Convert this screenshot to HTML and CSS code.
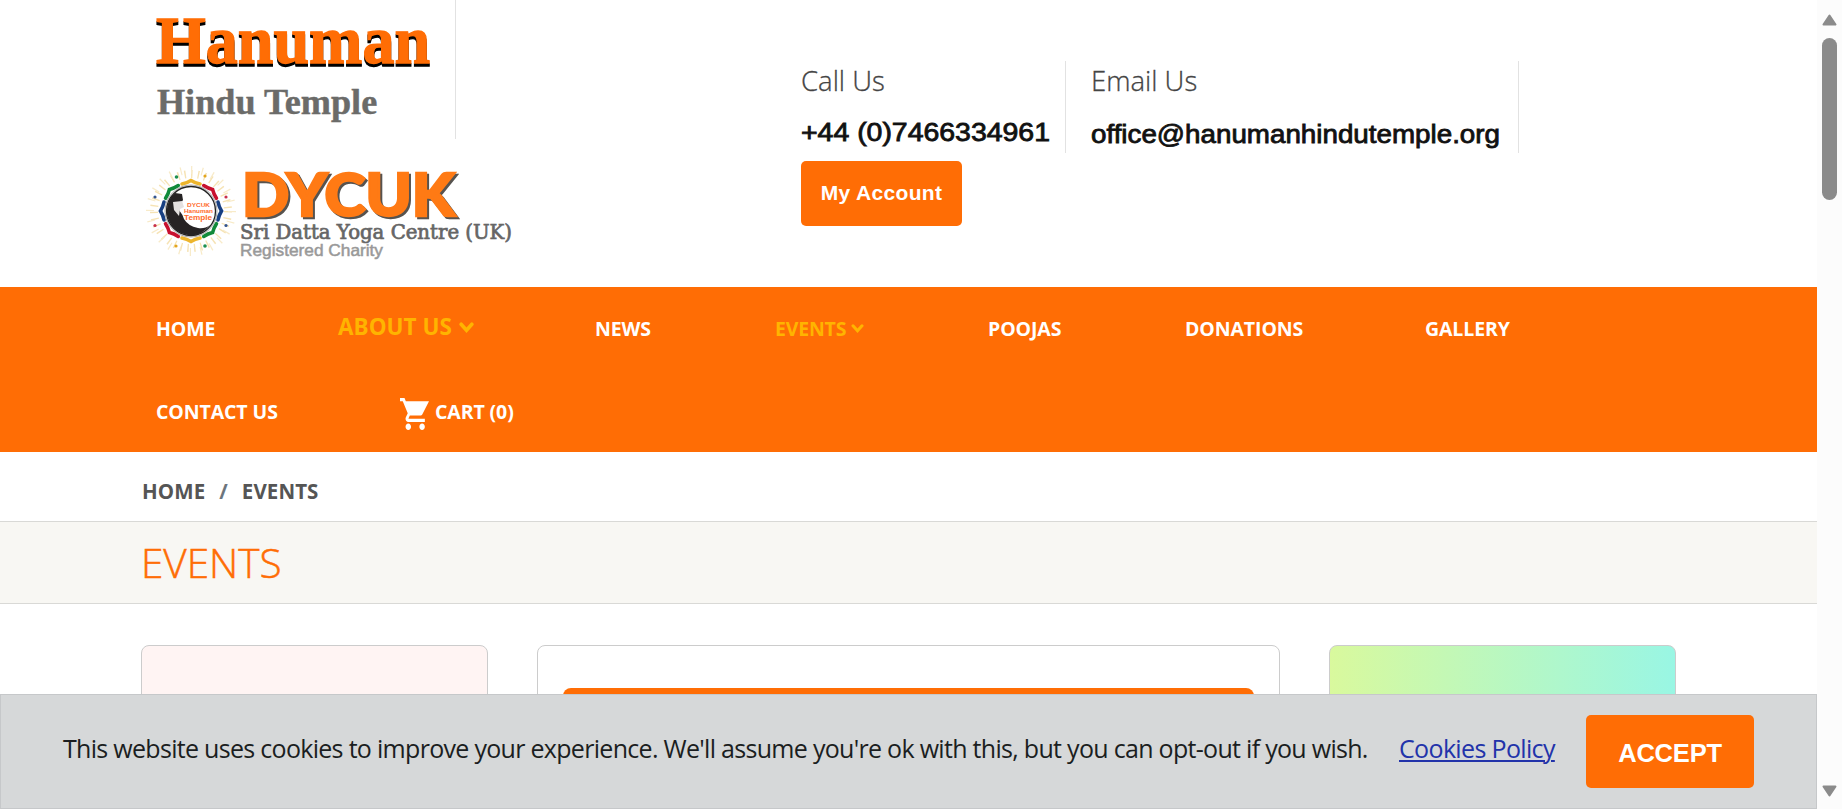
FILE: index.html
```html
<!DOCTYPE html>
<html lang="en">
<head>
<meta charset="utf-8">
<title>Events - Hanuman Hindu Temple</title>
<link rel="stylesheet" href="styles.css">
</head>
<body>
<div class="page">
  <header class="header">
    <div class="brand">
      <svg class="logo" width="315" height="139" viewBox="141 0 315 139">
        <g font-family="'Liberation Serif', serif" font-weight="bold">
          <text class="wordmark" x="156" y="63" font-size="67" textLength="275" lengthAdjust="spacingAndGlyphs" fill="#ff6d05" stroke="#ff6d05" stroke-width="1.300">Hanuman</text>
          <text x="157" y="114" font-size="35" textLength="221" lengthAdjust="spacingAndGlyphs" fill="#6b6b69" stroke="#6b6b69" stroke-width=".4">Hindu Temple</text>
        </g>
      </svg>
      <svg class="charity" width="375" height="120" viewBox="141 155 375 120">
        <g transform="translate(191 211)" fill="none">
          <circle r="37" stroke="#f6e3b4" stroke-width="8" stroke-dasharray="1.4 5.3"/>
          <circle r="41" stroke="#f8ebc9" stroke-width="8" stroke-dasharray="1.2 9.520"/>
          <g stroke-width="3.600" stroke-linecap="round">
            <path d="M-9-27Q-4-28 0-30.500Q4-28 9-27" stroke="#edb52c"/>
            <path d="M-9-27Q-4-28 0-30.500Q4-28 9-27" stroke="#c8102e" transform="rotate(45)"/>
            <path d="M-9-27Q-4-28 0-30.500Q4-28 9-27" stroke="#173f82" transform="rotate(90)"/>
            <path d="M-9-27Q-4-28 0-30.500Q4-28 9-27" stroke="#118a3a" transform="rotate(135)"/>
            <path d="M-9-27Q-4-28 0-30.500Q4-28 9-27" stroke="#edb52c" transform="rotate(180)"/>
            <path d="M-9-27Q-4-28 0-30.500Q4-28 9-27" stroke="#c8102e" transform="rotate(225)"/>
            <path d="M-9-27Q-4-28 0-30.500Q4-28 9-27" stroke="#173f82" transform="rotate(270)"/>
            <path d="M-9-27Q-4-28 0-30.500Q4-28 9-27" stroke="#118a3a" transform="rotate(315)"/>
          </g>
          <circle r="26" fill="#fff" stroke="#aaa" stroke-width="1"/>
          <circle r="24.500" stroke="#222" stroke-width="1.300"/>
          <path d="M-20-14L-16-18L-9-17L-8-11L-10-8L-12-1Q-8 4-7 8Q-3 15 7 17Q14 18 19 14Q10 26-3 24Q-20 21-24 4Q-25-6-20-14Z" fill="#262324"/>
          <path d="M-18-9L-9-10L-7-4L-11-2L-12 5L-17-1Z" fill="#e4e1e0"/>
          <g fill="#1d8f50"><circle cx="-14.500" cy="-34" r="1.800"/><circle cx="14" cy="35" r="1.800"/></g>
          <g fill="#c8304b"><circle cx="35" cy="-14" r="1.600"/><circle cx="-36" cy="14.500" r="1.600"/></g>
          <g fill="#34558f"><circle cx="-36" cy="-14" r="1.600"/><circle cx="35" cy="14.500" r="1.600"/></g>
          <g fill="#e3a51c"><circle cx="14" cy="-35" r="1.600"/><circle cx="-15" cy="35" r="1.600"/></g>
          <g fill="#ff6a2b" font-family="'Liberation Sans', sans-serif" font-weight="bold">
            <text x="-4" y="-4" font-size="5.500" textLength="23" lengthAdjust="spacingAndGlyphs">DYCUK</text>
            <text x="-7" y="2" font-size="5.500" textLength="29" lengthAdjust="spacingAndGlyphs">Hanuman</text>
            <text x="-7" y="9" font-size="7.500" textLength="28" lengthAdjust="spacingAndGlyphs">Temple</text>
          </g>
        </g>
        <text class="acronym" x="242" y="216" font-family="Lato, sans-serif" font-weight="900" font-size="59" textLength="213" lengthAdjust="spacingAndGlyphs" fill="#ff7a14" stroke="#ff7a14" stroke-width="2.500">DYCUK</text>
        <text x="240" y="239" font-family="'DejaVu Serif', serif" font-size="19.500" textLength="272" lengthAdjust="spacingAndGlyphs" fill="#666" stroke="#666" stroke-width=".7">Sri Datta Yoga Centre (UK)</text>
        <text x="240" y="256" font-family="'Liberation Sans', sans-serif" font-size="16.500" textLength="143" lengthAdjust="spacingAndGlyphs" fill="#999" stroke="#999" stroke-width=".5">Registered Charity</text>
      </svg>
    </div>
    <div class="contacts">
      <div class="contact contact-phone">
        <div class="label">Call Us</div>
        <svg class="contact-value" width="250" height="34" viewBox="0 0 250 34"><text x="0" y="24" font-size="25" textLength="249" lengthAdjust="spacingAndGlyphs">+44 (0)7466334961</text></svg>
      </div>
      <div class="contact contact-email">
        <div class="label">Email Us</div>
        <svg class="contact-value" width="412" height="34" viewBox="0 0 412 34"><text x="0" y="26" font-size="25" textLength="409" lengthAdjust="spacingAndGlyphs">office@hanumanhindutemple.org</text></svg>
      </div>
      <button class="btn account">My Account</button>
    </div>
  </header>

  <nav class="nav">
    <div class="nav-row">
      <a class="w-home">HOME</a>
      <a class="w-about active big">ABOUT US<svg width="15" height="11" viewBox="0 0 14 10"><path d="M2 2L7 7.500L12 2" /></svg></a>
      <a class="w-news">NEWS</a>
      <a class="w-events active">EVENTS<svg width="13" height="9" viewBox="0 0 14 10"><path d="M2 2L7 7.500L12 2" /></svg></a>
      <a class="w-poojas">POOJAS</a>
      <a class="w-donations">DONATIONS</a>
      <a class="w-gallery">GALLERY</a>
    </div>
    <div class="nav-row">
      <a class="w-contact">CONTACT US</a>
      <a class="w-cart"><svg class="cart" width="29" height="32" viewBox="1 2 21 20" preserveAspectRatio="none"><path d="M7 18c-1.100 0-1.990.9-1.990 2S5.900 22 7 22s2-.9 2-2-.9-2-2-2zM1 2v2h2l3.600 7.590-1.350 2.450c-.16.280-.25.610-.25.960 0 1.100.9 2 2 2h12v-2H7.420c-.14 0-.25-.11-.25-.25l.03-.12.900-1.630h7.450c.750 0 1.410-.41 1.750-1.030L22 4H5.210l-.94-2H1zm16 16c-1.100 0-1.990.9-1.990 2s.89 2 1.990 2 2-.9 2-2-.9-2-2-2z"/></svg>CART (0)</a>
    </div>
  </nav>

  <div class="breadcrumb"><span>HOME</span><span class="slash">/</span><span>EVENTS</span></div>
  <div class="title-bar"><h1>EVENTS</h1></div>

  <main class="columns">
    <section class="card pink"></section>
    <section class="card center"><div class="card-banner"></div></section>
    <section class="card lime"></section>
  </main>
</div>

<div class="cookie-bar">
  <span class="cookie-text">This website uses cookies to improve your experience. We'll assume you're ok with this, but you can opt-out if you wish.</span>
  <a class="cookie-link">Cookies Policy</a>
  <button class="btn accept">ACCEPT</button>
</div>

<div class="scrollbar">
  <svg width="15" height="12" viewBox="0 0 15 12"><path d="M7.500 1.500L13.500 10.500H1.500Z"/></svg>
  <div class="thumb"></div>
  <svg class="down" width="15" height="12" viewBox="0 0 15 12"><path d="M7.500 10.500L13.500 1.500H1.500Z"/></svg>
</div>
</body>
</html>
```
FILE: styles.css
```css
* { box-sizing: border-box; }
html, body { height: 809px; overflow: hidden; }
body {
  margin: 0;
  background: #fff;
  color: #555;
  font-family: "Open Sans", "Noto Sans", sans-serif;
}
svg { display: block; }
.page { width: 1817px; height: 809px; overflow: hidden; }

.header { height: 287px; display: flex; padding-left: 141px; }
.brand { width: 660px; }
.logo { border-right: 1px solid #e2e2e2; }
.wordmark { filter: drop-shadow(0 3px 0 #000); }
.acronym { filter: drop-shadow(2px 2px 0 #57534f); }
.charity { margin-top: 16px; }
.contacts {
  width: 720px;
  padding-top: 61px;
  display: grid;
  grid-template-columns: 265px 453px;
  grid-template-rows: 92px 65px;
  row-gap: 8px;
}
.contact { border-right: 1px solid #e2e2e2; }
.contact-email { padding-left: 25px; }
.label { height: 56px; padding-top: 1px; line-height: 37px; font-size: 27.5px; font-weight: 300; color: #444; -webkit-text-stroke: .3px #444; }
.contact-value { font-family: "Liberation Sans", sans-serif; fill: #111; stroke: #111; stroke-width: .8px; }
.btn {
  border: 0;
  padding: 0;
  border-radius: 5px;
  background: #ff6d05;
  color: #fff;
  font-family: "Liberation Sans", sans-serif;
  font-weight: bold;
}
.account { width: 161px; height: 65px; padding-bottom: 2px; font-size: 21px; letter-spacing: .35px; }

.nav { height: 165px; background: #ff6d05; padding-left: 156px; color: #fff; font-size: 19.5px; font-weight: 700; }
.nav-row { display: flex; height: 83px; }
.nav-row a { display: flex; flex: none; height: 83px; line-height: 83px; white-space: nowrap; letter-spacing: -.1px; }
.nav-row svg { margin: 37px 0 0 5px; fill: none; stroke: #ffb400; stroke-width: 3.4; stroke-linecap: round; }
.nav-row .active { color: #ffb400; letter-spacing: -.2px; }
.nav-row .big { font-size: 22.5px; line-height: 79px; letter-spacing: 0; }
.nav-row .big svg { margin: 35px 0 0 7px; }
.w-home { width: 182px; }
.w-about { width: 257px; }
.w-news { width: 180px; }
.w-events { width: 213px; }
.w-poojas { width: 197px; }
.w-donations { width: 240px; }
.w-contact { width: 244px; }
.nav-row .cart { margin: 28px 6px 0 0; fill: #fff; stroke: none; }

.breadcrumb { height: 69px; padding: 8px 0 0 142px; display: flex; line-height: 62px; font-size: 20.5px; font-weight: 700; letter-spacing: .1px; }
.slash { margin: 0 14px; color: #6c757d; }
.title-bar { height: 83px; padding-left: 141px; background: #f8f7f3; border: solid #d9d9d6; border-width: 1px 0; }
h1 { margin: 0; line-height: 81px; font-size: 40.5px; font-weight: 300; color: #ff6d05; letter-spacing: 0; -webkit-text-stroke: .5px #ff6d05; }

.columns { display: flex; justify-content: space-between; padding: 41px 141px 0; }
.card { height: 260px; border: 1px solid #ccc; border-radius: 8px; }
.pink { width: 347px; background: #fff4f3; }
.center { width: 743px; padding: 42px 25px 0; }
.card-banner { height: 80px; border-radius: 8px; background: #ff6d05; }
.lime { width: 347px; background: linear-gradient(90deg, #d9f99d, #99f6e4); }

.cookie-bar {
  position: absolute;
  left: 0;
  top: 694px;
  width: 1817px;
  height: 115px;
  display: flex;
  align-items: flex-start;
  padding: 20px 0 0 62px;
  background: #d6d8d9;
  border: 1px solid #c6c8ca;
  color: #1b1e21;
  font-size: 25px;
  font-weight: 400;
  line-height: 67px;
  white-space: nowrap;
}
.cookie-text { width: 1336px; letter-spacing: -.7px; }
.cookie-link { width: 187px; color: #2233aa; text-decoration: underline; text-decoration-thickness: 2px; text-underline-offset: 2px; letter-spacing: -.65px; }
.accept { width: 168px; height: 73px; padding-top: 3px; font-size: 25.5px; letter-spacing: -.2px; }

.scrollbar {
  position: absolute;
  right: 0;
  top: 0;
  width: 25px;
  height: 809px;
  padding: 14px 5px 12px;
  display: flex;
  flex-direction: column;
  background: #fcfcfc;
}
.scrollbar svg { fill: #8b8b8b; stroke: #8b8b8b; stroke-width: 2; stroke-linejoin: round; }
.thumb { margin-top: 12px; height: 162px; border-radius: 8px; background: #8b8b8b; }
.down { margin-top: auto; }
```
